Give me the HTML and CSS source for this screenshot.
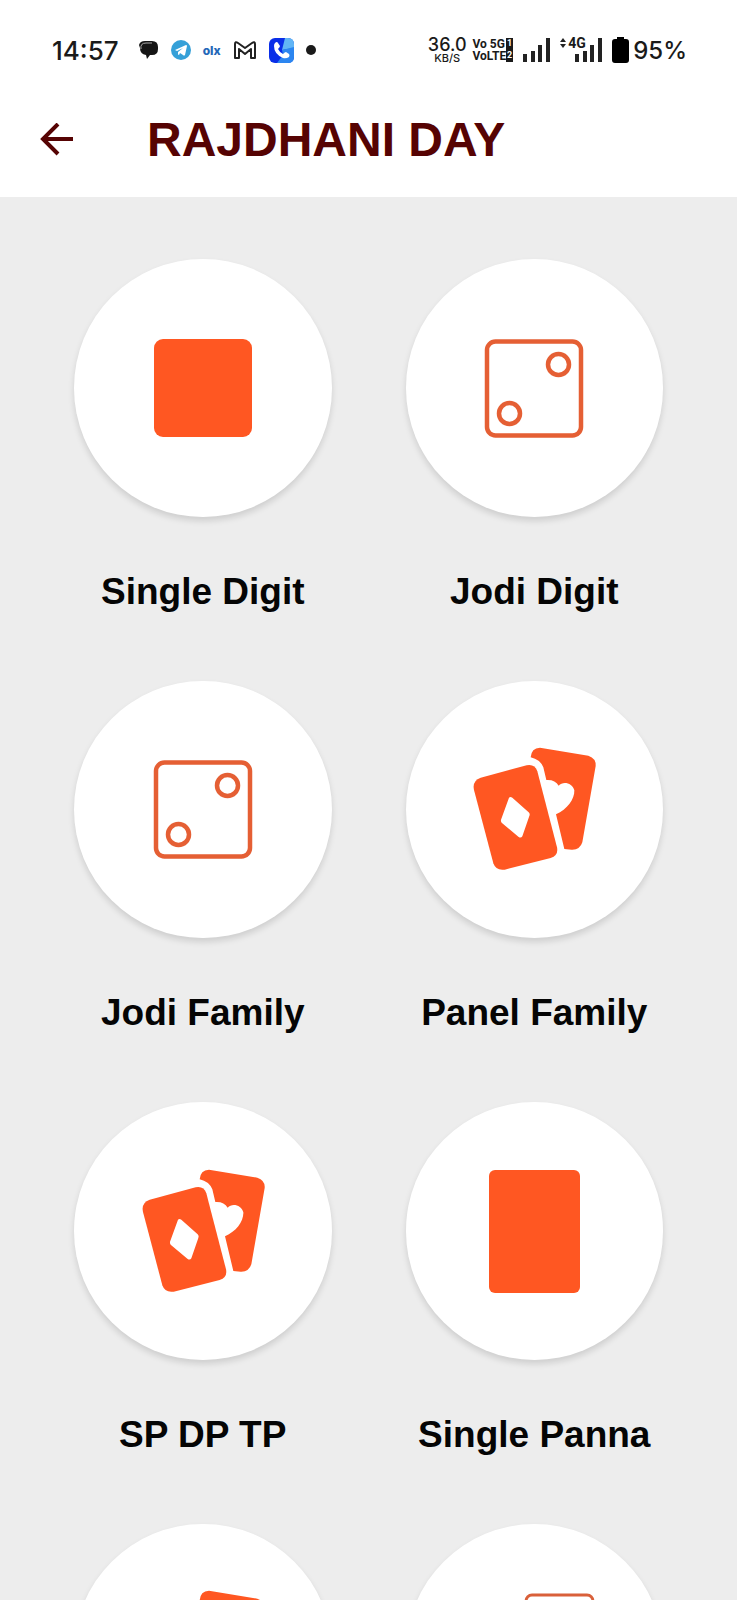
FILE: index.html
```html
<!DOCTYPE html>
<html lang="en">
<head>
    <meta charset="UTF-8">
    <meta name="viewport" content="width=device-width, initial-scale=1.0">
    <title>Rajdhani Day</title>
    <link rel="stylesheet" href="styles.css">
</head>
<body>
    <!-- shared game icons -->
    <svg class="sprite" aria-hidden="true">
        <symbol id="digit" viewBox="0 0 130 130">
            <rect x="16" y="16" width="98" height="98" rx="9" fill="#ff5722"/>
        </symbol>
        <symbol id="dice" viewBox="0 0 260 260">
            <g fill="none" stroke="#e55f34" stroke-width="9">
                <rect x="36" y="37" width="188" height="188" rx="17"/>
                <circle cx="179" cy="83" r="21"/>
                <circle cx="81" cy="181" r="21"/>
            </g>
        </symbol>
        <symbol id="cards" viewBox="27 30 390 390">
            <g fill="#ff5722">
                <path d="M62 131L200 94Q224 89 232 112L291 340Q296 364 272 372L134 407Q108 411 100 388L42 168Q36 140 62 131Z"/>
                <path d="M212 70Q214 42 240 41L385 65Q409 73 407 96L367 325Q360 348 335 347L313 345L288 241C322 226 344 196 343 169C338 147 309 140 296 155Q285 136 259 138L250 100Q240 76 212 70Z"/>
            </g>
            <path fill="#fff" d="M147 191Q151 187 157 191L206 235Q211 240 208 246L187 307Q183 313 176 309L125 266Q122 262 123 257Z"/>
        </symbol>
        <symbol id="panna" viewBox="0 0 130 130">
            <rect x="20" y="4" width="91" height="123" rx="6" fill="#ff5722"/>
        </symbol>
        <symbol id="deck" viewBox="0 0 130 130">
            <g fill="#fff" stroke="#d9603a" stroke-width="3">
                <rect x="57" y="8" width="67" height="96" rx="6"/>
                <rect x="32" y="18" width="67" height="96" rx="6"/>
                <rect x="7" y="29" width="67" height="96" rx="6"/>
            </g>
        </symbol>
    </svg>

    <div class="status-bar">
        <span class="clock">14:57</span>
        <div class="notifications">
            <svg width="20" height="20" viewBox="0 0 20 20"><path fill="#151515" d="M6 1H13Q19 1 19 7V9Q19 15 13 15H11L8 19L7 15Q1 14 1 8L0 5Q1 1 6 1Z"/><path d="M2 9Q1 3 7 3H13" fill="none" stroke="#aaa" stroke-width="1"/></svg>
            <svg width="20" height="20" viewBox="0 0 20 20"><circle cx="10" cy="10" r="10" fill="#35a0d8"/><path fill="#fff" d="M4 10L15 5Q16 5 16 6L14 15Q13 16 12 15L9 13L8 15Q7 15 7 14V12L12 8L6 11Z"/></svg>
            <span class="olx">olx</span>
            <svg width="24" height="20" viewBox="0 0 24 20"><path fill="none" stroke="#222" stroke-width="2" stroke-linejoin="round" d="M2 18V4Q2 1 5 3L12 8L19 3Q22 1 22 4V18H18V9L12 14L6 9V18Z"/></svg>
            <svg width="25" height="25" viewBox="0 0 25 25"><rect width="25" height="25" rx="6" fill="#0a2ee8"/><path fill="#62b5f5" d="M16 0H19Q25 0 25 6V10L13 12Z"/><path fill="#2c86f0" d="M13 12L25 9V19Q25 25 19 25H8L14 17Z"/><path fill="#fff" d="M6 5Q8 3 9 5L11 8Q11 9 9 11Q11 15 14 16Q16 14 17 14L20 16Q21 17 20 19Q17 21 14 20Q5 16 5 8Q5 6 6 5Z"/></svg>
            <span class="dot"></span>
        </div>
        <div class="network">
            <div class="speed"><b>36.0</b><span>KB/S</span></div>
            <div class="volte"><span>Vo 5G<i>1</i></span><span>VoLTE<i>2</i></span></div>
            <svg width="27" height="26" viewBox="0 0 27 26"><path fill="#222" d="M0 17h4v8h-4zM8 14h4v11h-4zM15 8h4v17h-4zM23 1h4v24h-4z"/></svg>
            <div class="signal">
                <svg width="42" height="26" viewBox="0 0 42 26"><path fill="#222" d="M0 5L3 1L6 5zM0 7H6L3 11zM15 17h4v8h-4zM23 14h4v11h-4zM30 8h4v17h-4zM38 1h4v24h-4z"/></svg>
                <span>4G</span>
            </div>
            <svg width="17" height="26" viewBox="0 0 17 26"><path d="M5 0H12V2H14Q17 2 17 5V23Q17 26 14 26H3Q0 26 0 23V5Q0 2 3 2H5Z"/></svg>
            <span class="battery">95%</span>
        </div>
    </div>

    <header class="toolbar">
        <button class="back" type="button" aria-label="Back">
            <svg width="34" height="34" viewBox="0 0 34 34"><path fill="none" stroke="#560303" stroke-width="4" d="M33 16H4M18 1L3 16L18 31"/></svg>
        </button>
        <h1>RAJDHANI DAY</h1>
    </header>

    <main class="games">
        <a class="game" href="#single-digit">
            <span class="circle"><svg><use href="#digit"/></svg></span>
            <span class="name">Single Digit</span>
        </a>
        <a class="game" href="#jodi-digit">
            <span class="circle"><svg><use href="#dice"/></svg></span>
            <span class="name">Jodi Digit</span>
        </a>
        <a class="game" href="#jodi-family">
            <span class="circle"><svg><use href="#dice"/></svg></span>
            <span class="name">Jodi Family</span>
        </a>
        <a class="game" href="#panel-family">
            <span class="circle"><svg><use href="#cards"/></svg></span>
            <span class="name">Panel Family</span>
        </a>
        <a class="game" href="#sp-dp-tp">
            <span class="circle"><svg><use href="#cards"/></svg></span>
            <span class="name">SP DP TP</span>
        </a>
        <a class="game" href="#single-panna">
            <span class="circle"><svg><use href="#panna"/></svg></span>
            <span class="name">Single Panna</span>
        </a>
        <a class="game" href="#cards-game">
            <span class="circle"><svg><use href="#cards"/></svg></span>
        </a>
        <a class="game" href="#deck-game">
            <span class="circle"><svg><use href="#deck"/></svg></span>
        </a>
    </main>
</body>
</html>
```
FILE: styles.css
```css
* {
    box-sizing: border-box;
}

body {
    margin: 0;
    height: 100vh;
    display: flex;
    flex-direction: column;
    background-color: #fff;
    font-family: "Liberation Sans", Arial, sans-serif;
}

svg {
    display: block;
    flex-shrink: 0;
}

.sprite {
    display: none;
}

/* Phone status bar */
.status-bar {
    display: flex;
    flex-shrink: 0;
    justify-content: space-between;
    align-items: center;
    height: 82px;
    padding: 18px 50px 0 52px;
    font-family: Inter, sans-serif;
    font-weight: 500;
    color: #1a1a1a;
}

.clock {
    font-size: 26px;
}

.notifications {
    display: flex;
    flex: 1;
    align-items: center;
    gap: 12px;
    margin-left: 20px;
}

.olx {
    font-size: 12px;
    font-weight: 800;
    color: #2468b8;
}

.dot {
    width: 10px;
    height: 10px;
    border-radius: 50%;
    background-color: #1a1a1a;
}

.network {
    display: flex;
    align-items: center;
    gap: 10px;
}

.speed,
.volte {
    display: flex;
    flex-direction: column;
    align-items: center;
    line-height: 12px;
}

.speed {
    font-size: 11px;
}

.speed b {
    font-size: 18px;
    font-weight: 500;
    line-height: 16px;
}

.speed span {
    line-height: 10px;
}

.volte {
    align-items: stretch;
    margin-left: -4px;
    font-family: Roboto, sans-serif;
    font-size: 12px;
    font-weight: 700;
}

.volte span {
    display: flex;
    justify-content: space-between;
}

.volte i {
    width: 7px;
    background-color: #1a1a1a;
    color: #fff;
    font-size: 9px;
    font-style: normal;
    line-height: 11px;
    text-align: center;
}

.signal {
    position: relative;
}

.signal span {
    position: absolute;
    top: 0;
    left: 8px;
    font-family: Roboto, sans-serif;
    font-size: 14px;
    font-weight: 700;
    line-height: 12px;
}

.battery {
    margin-left: -6px;
    font-size: 24px;
}

/* Title bar */
.toolbar {
    display: flex;
    flex-shrink: 0;
    align-items: center;
    height: 115px;
    padding: 0 40px;
}

.back {
    padding: 0;
    border: none;
    background: none;
    cursor: pointer;
}

.toolbar h1 {
    margin: 0 0 0 73px;
    font-size: 48px;
    line-height: 56px;
    color: #560303;
}

/* Game list */
.games {
    display: grid;
    flex: 1;
    grid-template-columns: 1fr 1fr;
    align-content: start;
    row-gap: 66px;
    min-height: 0;
    padding: 62px 37px;
    overflow-y: auto;
    scrollbar-width: none;
    background-color: #ededed;
}

.game {
    display: flex;
    flex-direction: column;
    color: #050505;
    text-decoration: none;
}

.circle {
    display: flex;
    justify-content: center;
    align-items: center;
    aspect-ratio: 1;
    margin: 0 37px;
    border-radius: 50%;
    background-color: #fff;
    box-shadow: 0 4px 6px rgba(0, 0, 0, 0.13);
}

.circle svg {
    width: 130px;
    height: 130px;
}

.name {
    margin-top: 52px;
    font-size: 37px;
    font-weight: 700;
    line-height: 46px;
    text-align: center;
}
```
